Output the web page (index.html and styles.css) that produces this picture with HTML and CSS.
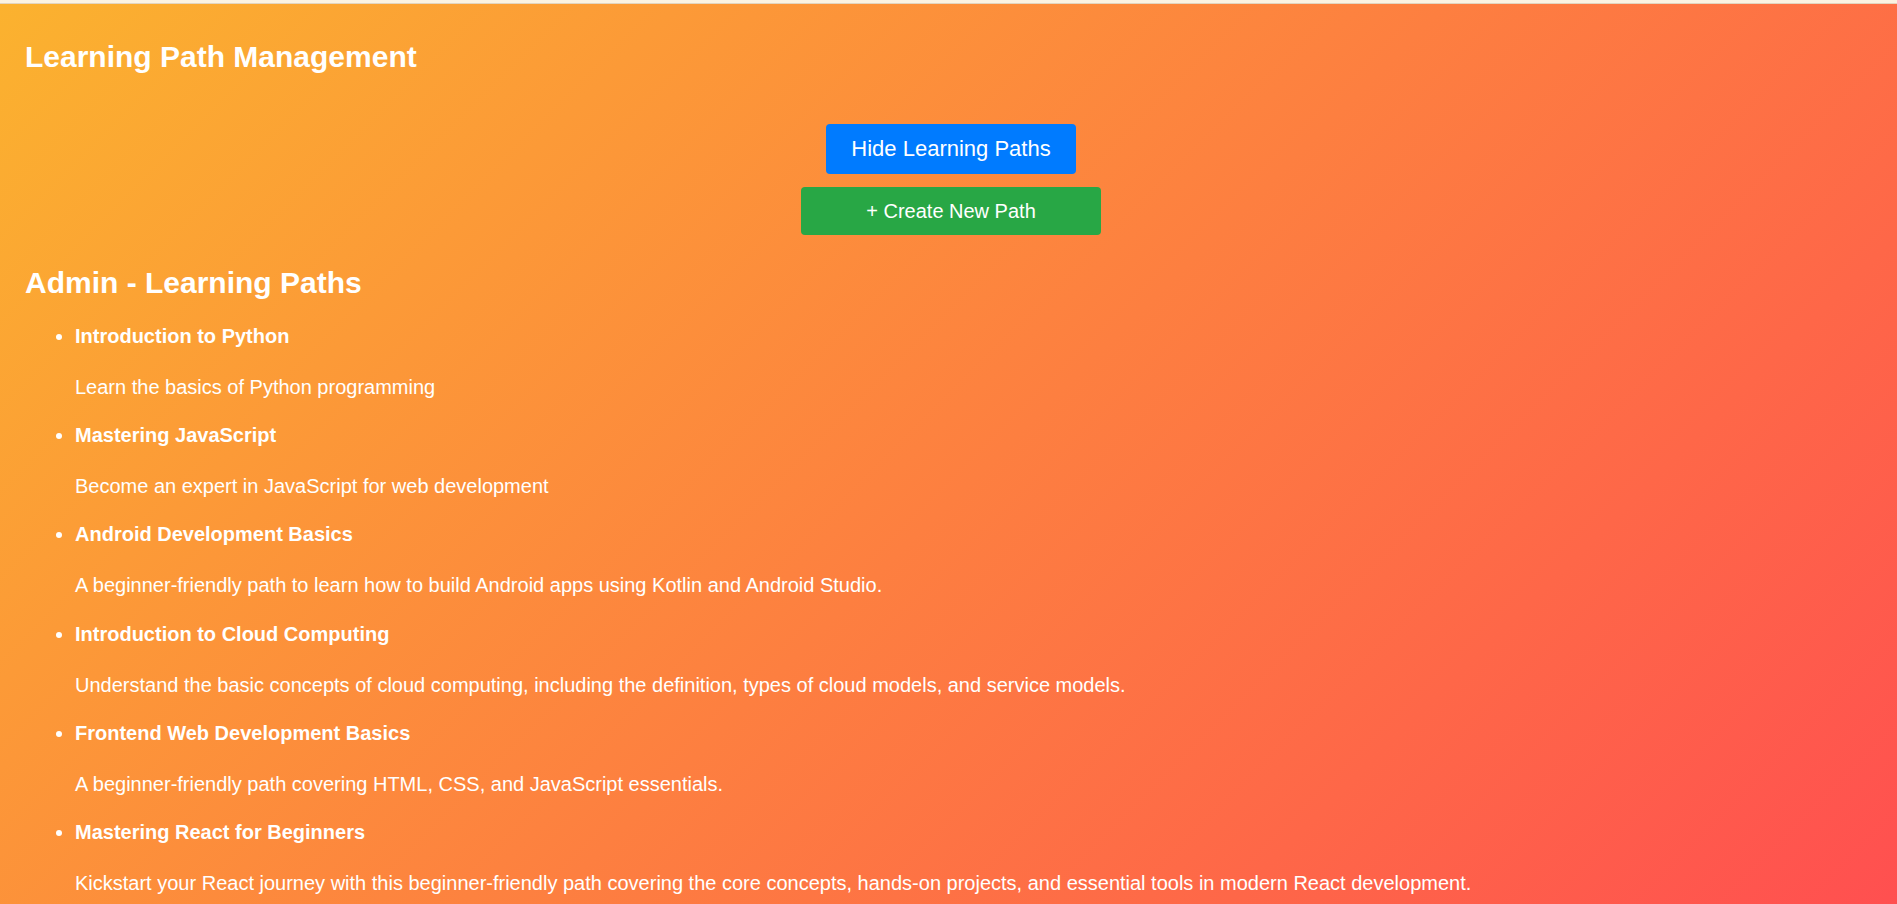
FILE: index.html
```html
<!DOCTYPE html>
<html lang="en">
<head>
<meta charset="utf-8">
<title>Learning Path Management</title>
<link rel="stylesheet" href="styles.css">
</head>
<body>
<div class="topbar"></div>
<main class="page">
  <h1 class="page-title">Learning Path Management</h1>
  <div class="actions">
    <button class="btn btn-toggle">Hide Learning Paths</button>
    <button class="btn btn-create">+ Create New Path</button>
  </div>
  <h2 class="section-title">Admin - Learning Paths</h2>
  <ul class="path-list">
    <li class="path-item">
      <h3 class="path-name">Introduction to Python</h3>
      <p class="path-desc">Learn the basics of Python programming</p>
    </li>
    <li class="path-item">
      <h3 class="path-name">Mastering JavaScript</h3>
      <p class="path-desc">Become an expert in JavaScript for web development</p>
    </li>
    <li class="path-item">
      <h3 class="path-name">Android Development Basics</h3>
      <p class="path-desc">A beginner-friendly path to learn how to build Android apps using Kotlin and Android Studio.</p>
    </li>
    <li class="path-item">
      <h3 class="path-name">Introduction to Cloud Computing</h3>
      <p class="path-desc">Understand the basic concepts of cloud computing, including the definition, types of cloud models, and service models.</p>
    </li>
    <li class="path-item">
      <h3 class="path-name">Frontend Web Development Basics</h3>
      <p class="path-desc">A beginner-friendly path covering HTML, CSS, and JavaScript essentials.</p>
    </li>
    <li class="path-item">
      <h3 class="path-name">Mastering React for Beginners</h3>
      <p class="path-desc">Kickstart your React journey with this beginner-friendly path covering the core concepts, hands-on projects, and essential tools in modern React development.</p>
    </li>
  </ul>
</main>
</body>
</html>
```

FILE: styles.css
```css
html, body {
  margin: 0;
  padding: 0;
  height: 100%;
}

body {
  font-family: "Liberation Sans", Arial, sans-serif;
  color: #ffffff;
  display: flex;
  flex-direction: column;
  overflow: hidden;
}

.topbar {
  height: 3px;
  background: #fbf3e2;
  border-bottom: 1px solid #e2d5bf;
  flex: none;
}

.page {
  flex: 1;
  padding: 0 20px 0 25px;
  background: linear-gradient(135deg, #fbb22f 0%, #ff4f50 100%);
}

.page-title {
  margin: 35px 0 0;
  font-size: 30px;
  line-height: 35px;
  font-weight: 700;
}

.actions {
  margin-top: 50px;
  display: flex;
  flex-direction: column;
  align-items: center;
  gap: 13px;
}

.btn {
  font-family: "Liberation Sans", Arial, sans-serif;
  color: #ffffff;
  border: none;
  border-radius: 4px;
  cursor: pointer;
  padding: 0;
}

.btn-toggle {
  background: #007bff;
  height: 50px;
  width: 250px;
  font-size: 22px;
}

.btn-create {
  background: #28a745;
  width: 300px;
  height: 48px;
  font-size: 20px;
}

.section-title {
  margin: 30px 0 0;
  font-size: 30px;
  line-height: 35px;
  font-weight: 700;
}

.path-list {
  margin: 21px 0 0;
  padding-left: 50px;
  list-style: disc;
}

.path-item {
  font-size: 20px;
  margin-bottom: 18.2px;
}

.path-name {
  margin: 0;
  font-size: 20px;
  line-height: 30px;
  font-weight: 700;
}

.path-desc {
  margin: 21px 0 0;
  font-size: 20px;
  line-height: 30px;
}
```
